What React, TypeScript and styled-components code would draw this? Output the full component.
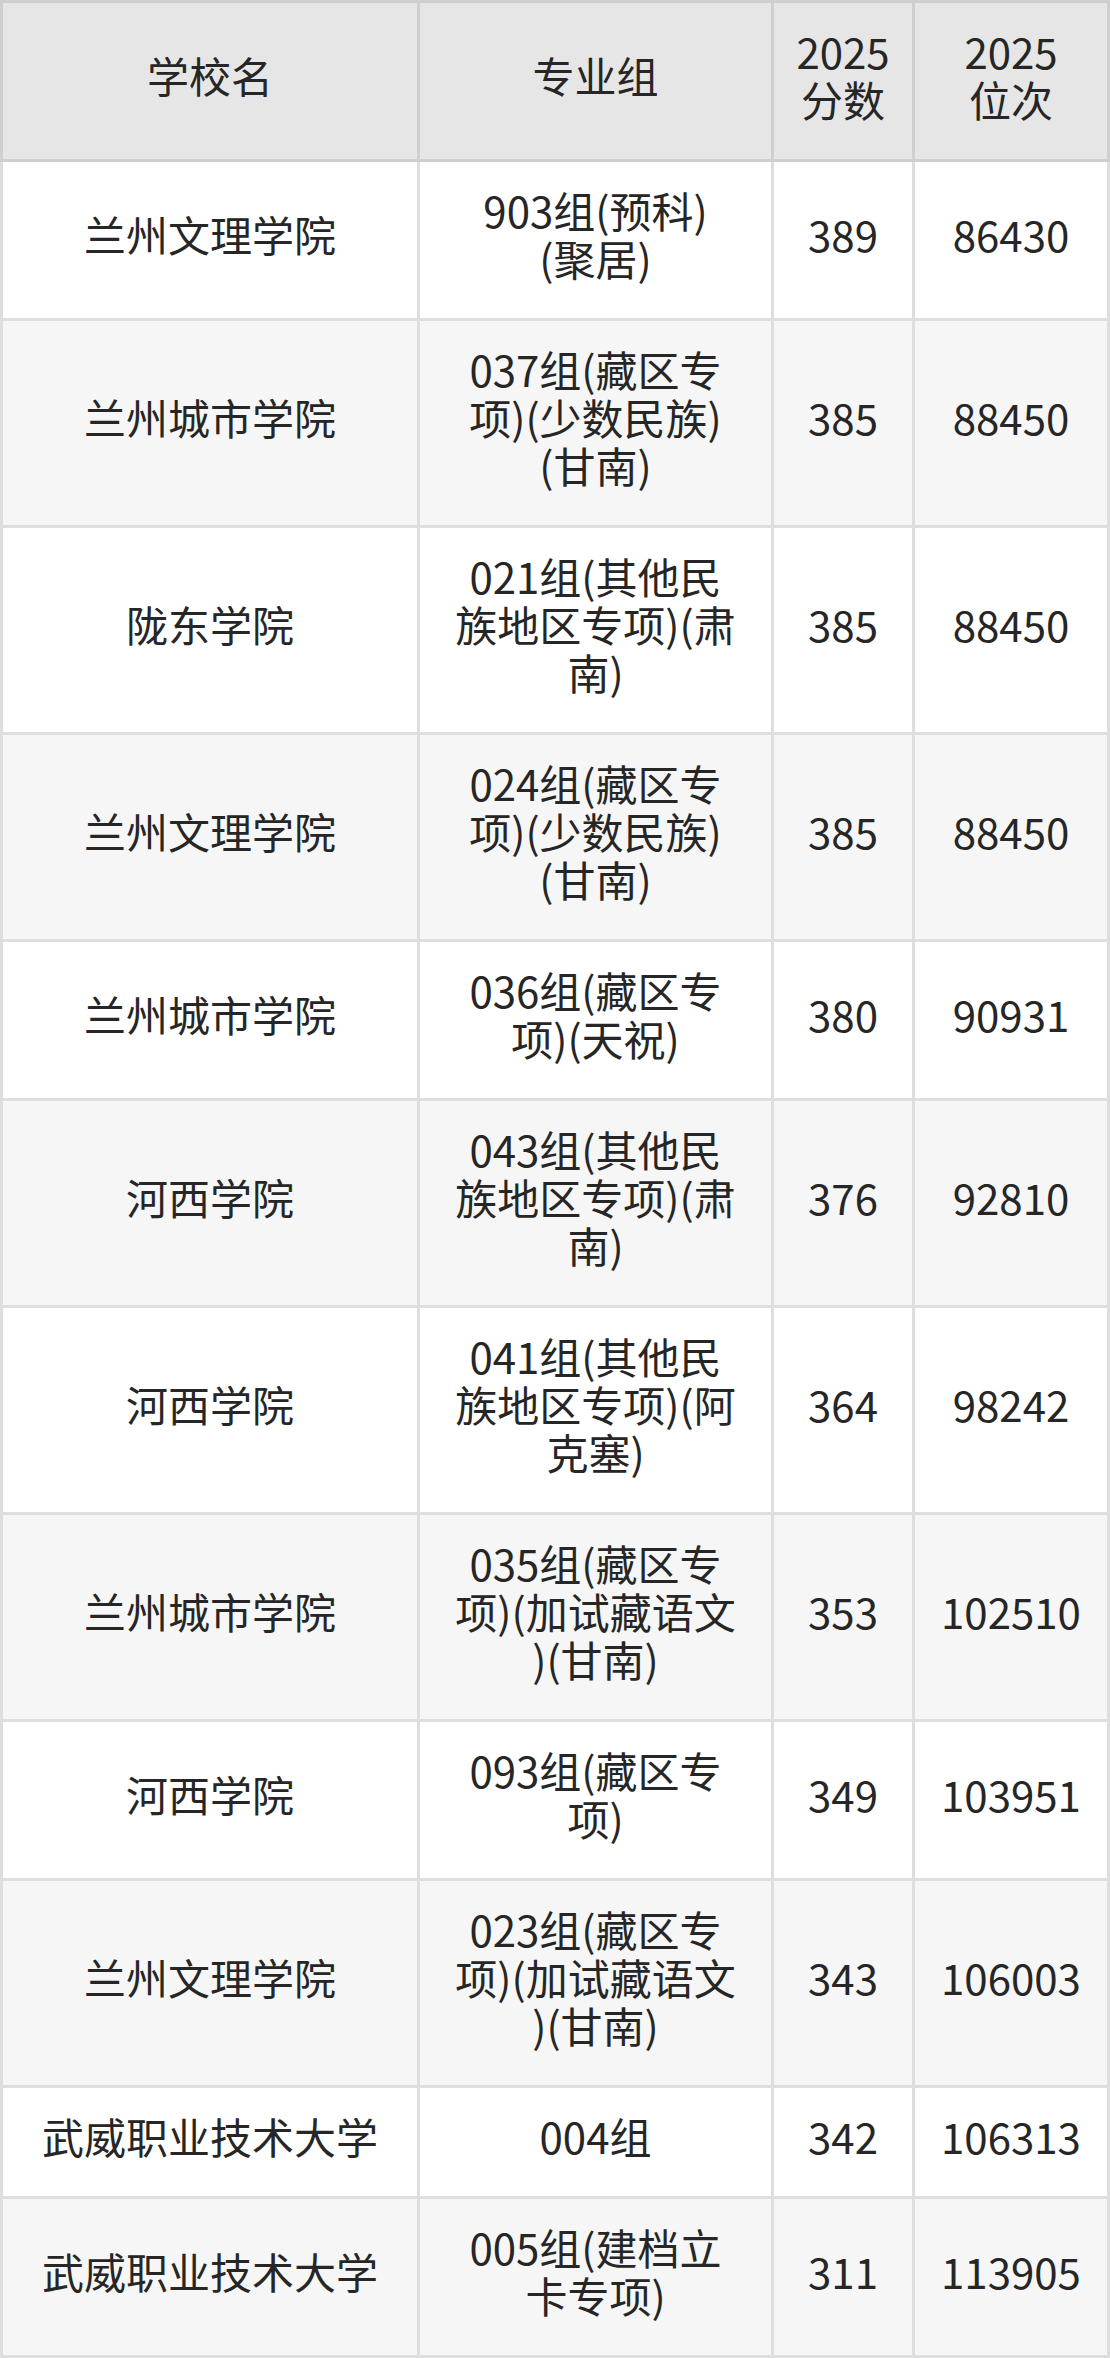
import React from "react";
import styled, { createGlobalStyle } from "styled-components";

const GlobalStyle = createGlobalStyle`
  html, body {
    margin: 0;
    padding: 0;
    background: #ffffff;
  }
  body {
    font-family: "Noto Sans CJK SC", "Noto Sans", sans-serif;
    color: #262626;
  }
`;

const Table = styled.div`
  display: grid;
  grid-template-columns: 420px 354px 141px 195px;
  width: 1110px;
`;

const Row = styled.div`
  display: contents;
`;

const HeadCell = styled.div<{ $first?: boolean }>`
  box-sizing: border-box;
  display: flex;
  align-items: center;
  justify-content: center;
  text-align: center;
  padding: 24px 8px 36px;
  background: #e6e6e6;
  border-top: 3px solid #cfcfcf;
  border-bottom: 3px solid #cfcfcf;
  border-right: 3px solid #cfcfcf;
  border-left: ${(p) => (p.$first ? "3px solid #cfcfcf" : "none")};
  font-size: 42px;
  line-height: 48px;
  font-weight: 400;
`;

const Cell = styled.div<{ $alt?: boolean; $first?: boolean }>`
  box-sizing: border-box;
  display: flex;
  flex-direction: column;
  align-items: center;
  justify-content: center;
  text-align: center;
  padding: 24px 8px 36px;
  background: ${(p) => (p.$alt ? "#f6f6f6" : "#ffffff")};
  border-bottom: 3px solid #dedede;
  border-right: 3px solid #dedede;
  border-left: ${(p) => (p.$first ? "3px solid #dedede" : "none")};
  font-size: 42px;
  line-height: 48px;
`;

const Line = styled.span`
  display: block;
  white-space: nowrap;
`;

type Item = {
  school: string;
  group: string[];
  score: string;
  rank: string;
};

const rows: Item[] = [
  { school: "兰州文理学院", group: ["903组(预科)", "(聚居)"], score: "389", rank: "86430" },
  { school: "兰州城市学院", group: ["037组(藏区专", "项)(少数民族)", "(甘南)"], score: "385", rank: "88450" },
  { school: "陇东学院", group: ["021组(其他民", "族地区专项)(肃", "南)"], score: "385", rank: "88450" },
  { school: "兰州文理学院", group: ["024组(藏区专", "项)(少数民族)", "(甘南)"], score: "385", rank: "88450" },
  { school: "兰州城市学院", group: ["036组(藏区专", "项)(天祝)"], score: "380", rank: "90931" },
  { school: "河西学院", group: ["043组(其他民", "族地区专项)(肃", "南)"], score: "376", rank: "92810" },
  { school: "河西学院", group: ["041组(其他民", "族地区专项)(阿", "克塞)"], score: "364", rank: "98242" },
  { school: "兰州城市学院", group: ["035组(藏区专", "项)(加试藏语文", ")(甘南)"], score: "353", rank: "102510" },
  { school: "河西学院", group: ["093组(藏区专", "项)"], score: "349", rank: "103951" },
  { school: "兰州文理学院", group: ["023组(藏区专", "项)(加试藏语文", ")(甘南)"], score: "343", rank: "106003" },
  { school: "武威职业技术大学", group: ["004组"], score: "342", rank: "106313" },
  { school: "武威职业技术大学", group: ["005组(建档立", "卡专项)"], score: "311", rank: "113905" },
];

export default function App() {
  return (
    <>
      <GlobalStyle />
      <Table>
        <Row>
          <HeadCell $first>学校名</HeadCell>
          <HeadCell>专业组</HeadCell>
          <HeadCell>
            <div>
              <Line>2025</Line>
              <Line>分数</Line>
            </div>
          </HeadCell>
          <HeadCell>
            <div>
              <Line>2025</Line>
              <Line>位次</Line>
            </div>
          </HeadCell>
        </Row>
        {rows.map((r, i) => {
          const alt = i % 2 === 1;
          return (
            <Row key={i}>
              <Cell $alt={alt} $first>
                <Line>{r.school}</Line>
              </Cell>
              <Cell $alt={alt}>
                {r.group.map((g, j) => (
                  <Line key={j}>{g}</Line>
                ))}
              </Cell>
              <Cell $alt={alt}>
                <Line>{r.score}</Line>
              </Cell>
              <Cell $alt={alt}>
                <Line>{r.rank}</Line>
              </Cell>
            </Row>
          );
        })}
      </Table>
    </>
  );
}
